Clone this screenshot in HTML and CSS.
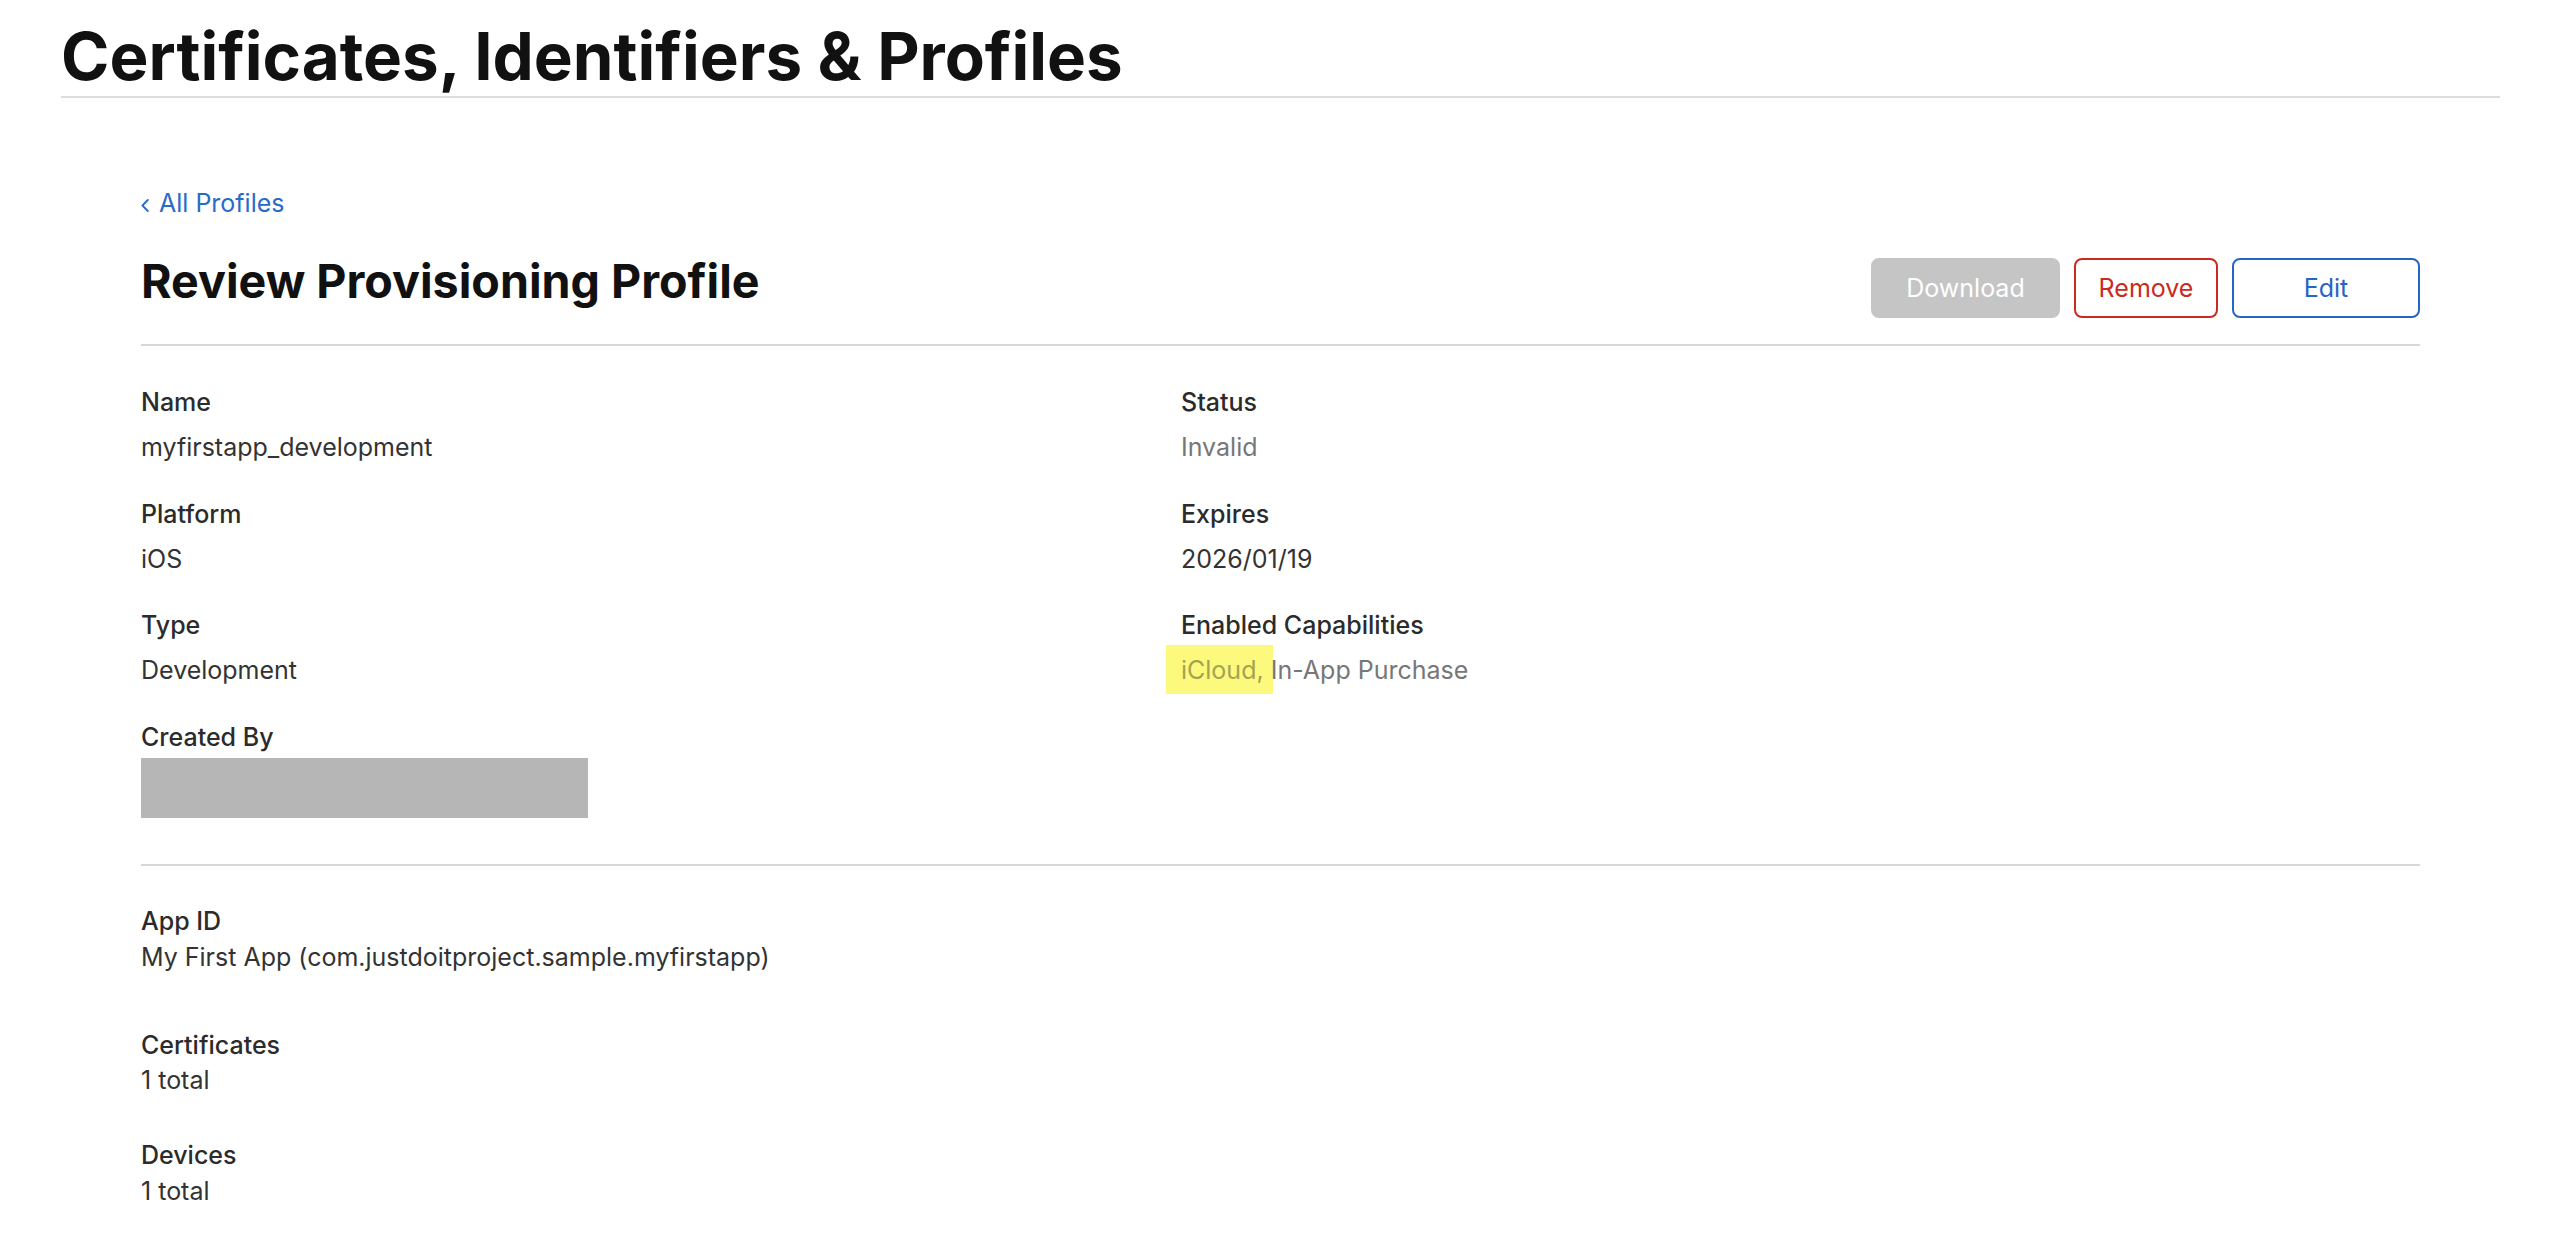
FILE: index.html
```html
<!DOCTYPE html>
<html lang="en">
<head>
<meta charset="utf-8">
<title>Review Provisioning Profile</title>
<link rel="stylesheet" href="styles.css">
</head>
<body>
<div class="page">
  <header class="page-header">
    <h1 class="page-title">Certificates, Identifiers &amp; Profiles</h1>
  </header>
  <main class="content">
    <a class="back-link" href="#">
      <svg class="chevron" width="8" height="13" viewBox="0 0 8 13" aria-hidden="true"><polyline points="6.8,1 1.4,6.5 6.8,12" fill="none" stroke="currentColor" stroke-width="1.8" stroke-linecap="round" stroke-linejoin="round"/></svg>
      <span>All Profiles</span>
    </a>
    <div class="title-row">
      <h2 class="section-title">Review Provisioning Profile</h2>
      <div class="actions">
        <button class="btn btn-download" type="button">Download</button>
        <button class="btn btn-remove" type="button">Remove</button>
        <button class="btn btn-edit" type="button">Edit</button>
      </div>
    </div>
    <section class="details">
      <div class="column">
        <div class="field">
          <div class="label">Name</div>
          <div class="value">myfirstapp_development</div>
        </div>
        <div class="field">
          <div class="label">Platform</div>
          <div class="value">iOS</div>
        </div>
        <div class="field">
          <div class="label">Type</div>
          <div class="value">Development</div>
        </div>
        <div class="field">
          <div class="label">Created By</div>
          <div class="redacted"></div>
        </div>
      </div>
      <div class="column">
        <div class="field">
          <div class="label">Status</div>
          <div class="value value-muted">Invalid</div>
        </div>
        <div class="field">
          <div class="label">Expires</div>
          <div class="value">2026/01/19</div>
        </div>
        <div class="field">
          <div class="label">Enabled Capabilities</div>
          <div class="value value-muted"><span class="hl">iCloud, </span>In-App Purchase</div>
        </div>
      </div>
    </section>
    <section class="summary">
      <div class="field">
        <div class="label">App ID</div>
        <div class="value">My First App (com.justdoitproject.sample.myfirstapp)</div>
      </div>
      <div class="field field-certs">
        <div class="label">Certificates</div>
        <div class="value">1 total</div>
      </div>
      <div class="field field-devices">
        <div class="label">Devices</div>
        <div class="value">1 total</div>
      </div>
    </section>
  </main>
</div>
</body>
</html>
```
FILE: styles.css
```css
html, body {
  margin: 0;
  padding: 0;
  background: #ffffff;
}

body {
  font-family: Inter, "Noto Sans", sans-serif;
  color: #333333;
  font-size: 25px;
  line-height: 30px;
}

.page {
  margin: 0 68px 0 61px;
}

.page-header {
  padding-top: 17px;
  border-bottom: 2px solid #dddddd;
}

.page-title {
  margin: 0;
  font-size: 65.5px;
  line-height: 79px;
  font-weight: 700;
  color: #111111;
}

.content {
  padding: 0 80px;
}

.back-link {
  display: inline-flex;
  align-items: baseline;
  gap: 10px;
  margin-top: 90px;
  color: #2a6bc6;
  text-decoration: none;
  font-size: 25px;
  line-height: 30px;
}

.chevron {
  margin-bottom: -1px;
}

.title-row {
  display: flex;
  justify-content: space-between;
  align-items: flex-start;
  margin-top: 35px;
  padding-bottom: 26px;
  border-bottom: 2px solid #d7d7d7;
}

.section-title {
  margin: 0;
  font-size: 46.6px;
  line-height: 56px;
  font-weight: 700;
  color: #111111;
}

.actions {
  display: flex;
  gap: 14px;
  margin-top: 5px;
}

.btn {
  box-sizing: border-box;
  height: 60px;
  padding: 0;
  border: 2px solid;
  border-radius: 8px;
  background: #ffffff;
  font-family: Inter, "Noto Sans", sans-serif;
  font-size: 25px;
  line-height: 30px;
  cursor: pointer;
}

.btn-download {
  width: 189px;
  background: #c5c5c5;
  border-color: #c5c5c5;
  color: #ffffff;
}

.btn-remove {
  width: 144px;
  color: #cb2a21;
  border-color: #cb2a21;
}

.btn-edit {
  width: 188px;
  color: #2566c2;
  border-color: #2566c2;
}

.details {
  display: grid;
  grid-template-columns: 1040px 1fr;
  padding-top: 41px;
  padding-bottom: 46px;
  border-bottom: 2px solid #d7d7d7;
}

.column {
  display: flex;
  flex-direction: column;
  gap: 36.5px;
}

.label {
  font-weight: 500;
  color: #2b2b2b;
}

.details .value {
  margin-top: 15px;
}

.value-muted {
  color: #777777;
}

.hl {
  background: #fdf97d;
  color: #a5a352;
  padding: 10px 2px 9px 15px;
  margin-left: -15px;
  margin-right: -2px;
}

.redacted {
  margin-top: 6.5px;
  width: 447px;
  height: 60px;
  background: #b6b6b6;
}

.summary {
  padding-top: 40px;
}

.summary .value {
  margin-top: 5.5px;
}

.field-certs {
  margin-top: 58px;
}

.field-devices {
  margin-top: 45px;
}
```
